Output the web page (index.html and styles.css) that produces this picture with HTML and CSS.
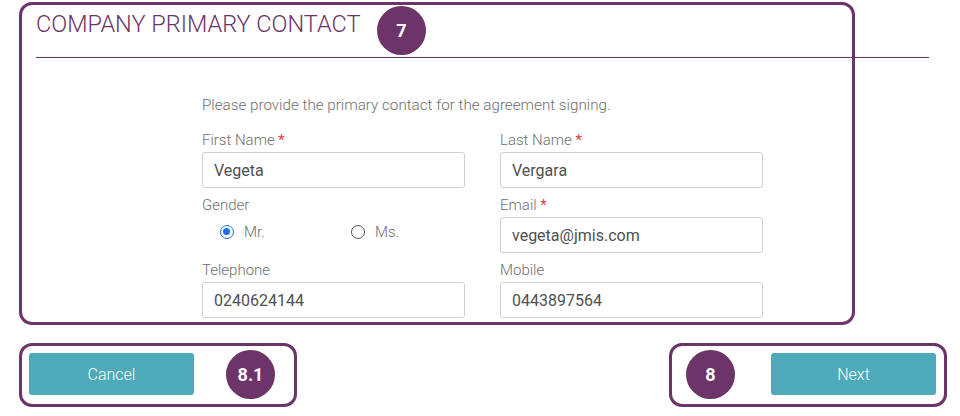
FILE: index.html
```html
<!DOCTYPE html>
<html>
<head>
<meta charset="utf-8">
<link rel="stylesheet" href="styles.css">
</head>
<body>
<div class="page">
  <header class="section-head">
    <h1 class="title">COMPANY PRIMARY CONTACT</h1>
  </header>
  <div class="form">
    <p class="intro">Please provide the primary contact for the agreement signing.</p>
    <div class="grid">
      <div class="field">
        <label class="label">First Name <span class="req">*</span></label>
        <div class="input">Vegeta</div>
      </div>
      <div class="field">
        <label class="label">Last Name <span class="req">*</span></label>
        <div class="input">Vergara</div>
      </div>
      <div class="field">
        <label class="label">Gender</label>
        <div class="radios">
          <span class="radio"><span class="dot checked"></span>Mr.</span>
          <span class="radio"><span class="dot"></span>Ms.</span>
        </div>
      </div>
      <div class="field">
        <label class="label">Email <span class="req">*</span></label>
        <div class="input">vegeta@jmis.com</div>
      </div>
      <div class="field">
        <label class="label">Telephone</label>
        <div class="input">0240624144</div>
      </div>
      <div class="field">
        <label class="label">Mobile</label>
        <div class="input">0443897564</div>
      </div>
    </div>
  </div>
  <div class="actions">
    <button class="btn">Cancel</button>
    <button class="btn">Next</button>
  </div>
</div>

<div class="note note-main"></div>
<div class="note note-cancel"></div>
<div class="note note-next"></div>
<div class="badge badge-7">7</div>
<div class="badge badge-81">8.1</div>
<div class="badge badge-8">8</div>
</body>
</html>
```

FILE: styles.css
```css
* { box-sizing: border-box; }
html, body { margin: 0; padding: 0; background: #fff; }
body {
  width: 960px;
  height: 416px;
  overflow: hidden;
  position: relative;
  font-family: Roboto, "Liberation Sans", Arial, sans-serif;
}
.page { padding-top: 9px; }
.section-head {
  margin: 0 31px 0 36px;
  border-bottom: 1px solid #6c3469;
  height: 49px;
}
.title {
  margin: 0;
  font-size: 23.5px;
  font-weight: 300;
  color: #6c3469;
  line-height: 30px;
}
.form {
  margin-left: 202px;
  width: 561px;
}
.intro {
  margin: 37px 0 0 0;
  line-height: 20px;
  font-size: 15.2px;
  font-weight: 300;
  color: #6f6f6f;
}
.grid {
  margin-top: 15px;
  display: grid;
  grid-template-columns: 263px 263px;
  column-gap: 35px;
  row-gap: 7px;
}
.field { display: flex; flex-direction: column; }
.label {
  font-size: 15px;
  font-weight: 300;
  line-height: 20px;
  color: #6f6f6f;
  margin-bottom: 2px;
}
.req { color: #e53935; font-weight: 400; }
.input {
  height: 36px;
  border: 1px solid #d0d0d0;
  border-radius: 3px;
  padding: 0 11px;
  display: flex;
  align-items: center;
  font-size: 16px;
  color: #505050;
}
.radios {
  display: flex;
  padding-left: 18px;
  height: 24px;
  align-items: center;
  margin-top: 3px;
}
.radio {
  display: flex;
  align-items: center;
  font-size: 15px;
  font-weight: 300;
  color: #6f6f6f;
  width: 131px;
  flex-shrink: 0;
}
.dot {
  width: 14px;
  height: 14px;
  border-radius: 50%;
  border: 1.5px solid #555;
  margin-right: 10px;
  position: relative;
}
.dot.checked { border-color: #1e6fe8; }
.dot.checked::after {
  content: "";
  position: absolute;
  left: 2px; top: 2px;
  width: 7px; height: 7px;
  border-radius: 50%;
  background: #1e6fe8;
}
.actions {
  display: flex;
  justify-content: space-between;
  padding: 0 24px 0 29px;
  margin-top: 35px;
}
.btn {
  width: 165px;
  height: 42px;
  border: none;
  border-radius: 3px;
  background: #4eaab9;
  color: #fff;
  font-family: Roboto, "Liberation Sans", Arial, sans-serif;
  font-size: 16px;
  font-weight: 300;
}
.note {
  position: absolute;
  border: 3px solid #6c3469;
  border-radius: 13px;
}
.note-main { left: 19px; top: 2px; width: 836px; height: 323px; }
.note-cancel { left: 19px; top: 343px; width: 278px; height: 64px; }
.note-next { left: 669px; top: 343px; width: 278px; height: 64px; }
.badge {
  position: absolute;
  width: 49px;
  height: 49px;
  border-radius: 50%;
  background: #6c3469;
  color: #fff;
  font-weight: 700;
  font-size: 18px;
  display: flex;
  align-items: center;
  justify-content: center;
}
.badge-7 { left: 377px; top: 6px; }
.badge-81 { left: 226px; top: 350px; }
.badge-8 { left: 686px; top: 350px; }
```
